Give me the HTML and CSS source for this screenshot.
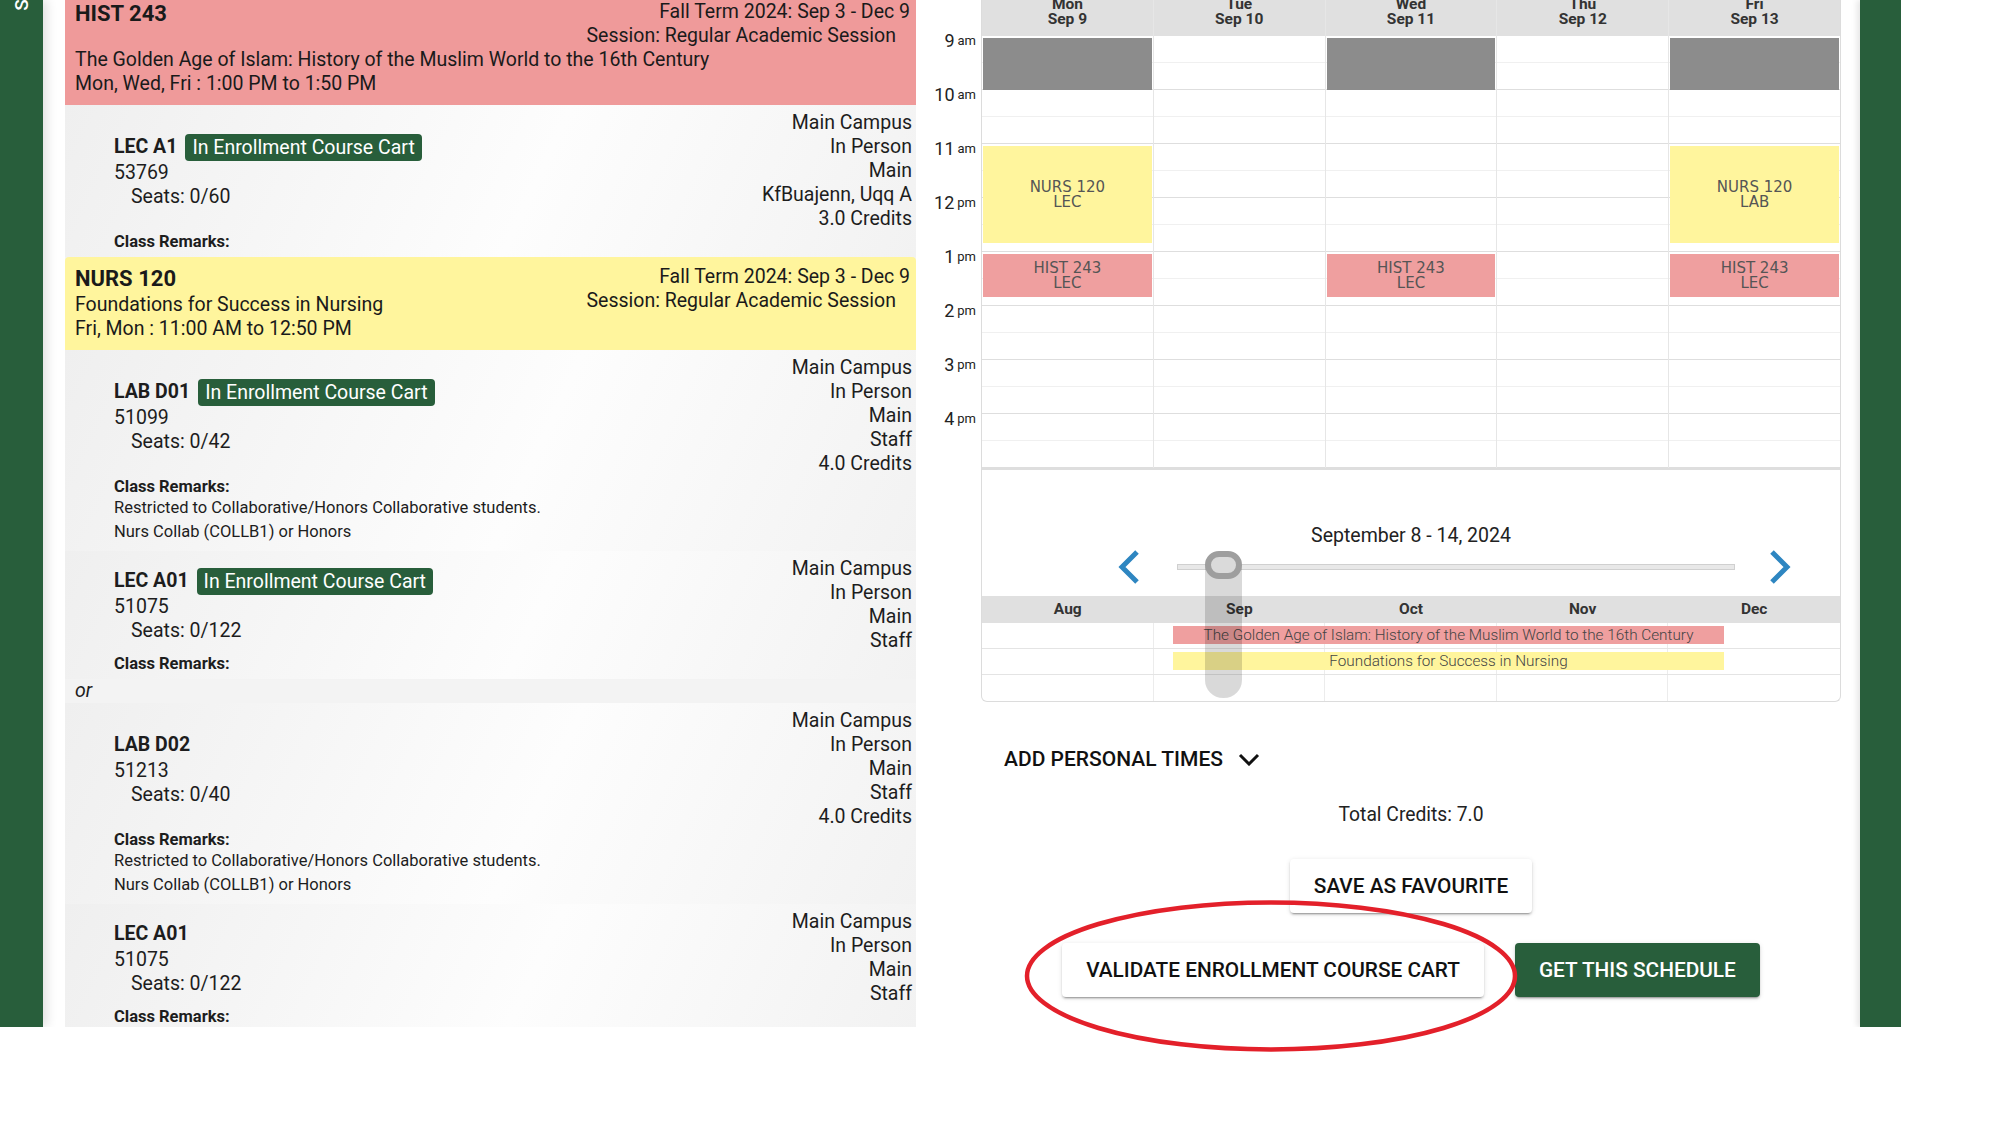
FILE: index.html
```html
<!DOCTYPE html>
<html lang="en">
<head>
    <meta charset="UTF-8">
    <meta name="viewport" content="width=device-width, initial-scale=1.0">
    <title>Schedule Builder</title>
    <link rel="stylesheet" href="styles.css">
</head>
<body>
    <div class="app">
        <aside class="rail rail-left"><span class="rail-label">SEARCH</span></aside>

        <section class="courses">
            <!-- HIST 243 -->
            <div class="course-head hist">
                <div class="term">
                    <div>Fall Term 2024: Sep 3 - Dec 9</div>
                    <div class="session">Session: Regular Academic Session</div>
                </div>
                <div class="code">HIST 243</div>
                <div><span class="line">The Golden Age of Islam: History of the Muslim World to the 16th Century</span></div>
                <div><span class="line">Mon, Wed, Fri : 1:00 PM to 1:50 PM</span></div>
            </div>
            <div class="option">
                <div class="pick"></div>
                <div class="option-body">
                    <div class="section">
                        <div class="section-main">
                            <div class="section-id">
                                <div class="section-name"><b>LEC A1</b><span class="badge">In Enrollment Course Cart</span></div>
                                <div>53769</div>
                                <div class="seats">Seats: 0/60</div>
                            </div>
                            <div class="section-meta">
                                <div>Main Campus</div>
                                <div>In Person</div>
                                <div>Main</div>
                                <div>KfBuajenn, Uqq A</div>
                                <div>3.0 Credits</div>
                            </div>
                        </div>
                        <div class="remarks">
                            <div class="remarks-title">Class Remarks:</div>
                        </div>
                    </div>
                </div>
            </div>

            <!-- NURS 120 -->
            <div class="course-head nurs">
                <div class="term">
                    <div>Fall Term 2024: Sep 3 - Dec 9</div>
                    <div class="session">Session: Regular Academic Session</div>
                </div>
                <div class="code">NURS 120</div>
                <div><span class="line">Foundations for Success in Nursing</span></div>
                <div><span class="line">Fri, Mon : 11:00 AM to 12:50 PM</span></div>
            </div>

            <div class="option">
                <div class="pick"><span class="radio checked"></span></div>
                <div class="option-body">
                    <div class="section">
                        <div class="section-main">
                            <div class="section-id">
                                <div class="section-name"><b>LAB D01</b><span class="badge">In Enrollment Course Cart</span></div>
                                <div>51099</div>
                                <div class="seats">Seats: 0/42</div>
                            </div>
                            <div class="section-meta">
                                <div>Main Campus</div>
                                <div>In Person</div>
                                <div>Main</div>
                                <div>Staff</div>
                                <div>4.0 Credits</div>
                            </div>
                        </div>
                        <div class="remarks">
                            <div class="remarks-title">Class Remarks:</div>
                            <div class="remarks-text">
                                <p>Restricted to Collaborative/Honors Collaborative students.</p>
                                <p>Nurs Collab (COLLB1) or Honors</p>
                            </div>
                        </div>
                    </div>
                    <div class="section">
                        <div class="section-main">
                            <div class="section-id">
                                <div class="section-name"><b>LEC A01</b><span class="badge">In Enrollment Course Cart</span></div>
                                <div>51075</div>
                                <div class="seats">Seats: 0/122</div>
                            </div>
                            <div class="section-meta">
                                <div>Main Campus</div>
                                <div>In Person</div>
                                <div>Main</div>
                                <div>Staff</div>
                            </div>
                        </div>
                        <div class="remarks">
                            <div class="remarks-title">Class Remarks:</div>
                        </div>
                    </div>
                </div>
            </div>

            <div class="or">or</div>

            <div class="option">
                <div class="pick"><span class="radio"></span></div>
                <div class="option-body">
                    <div class="section">
                        <div class="section-main">
                            <div class="section-id">
                                <div class="section-name"><b>LAB D02</b></div>
                                <div>51213</div>
                                <div class="seats">Seats: 0/40</div>
                            </div>
                            <div class="section-meta">
                                <div>Main Campus</div>
                                <div>In Person</div>
                                <div>Main</div>
                                <div>Staff</div>
                                <div>4.0 Credits</div>
                            </div>
                        </div>
                        <div class="remarks">
                            <div class="remarks-title">Class Remarks:</div>
                            <div class="remarks-text">
                                <p>Restricted to Collaborative/Honors Collaborative students.</p>
                                <p>Nurs Collab (COLLB1) or Honors</p>
                            </div>
                        </div>
                    </div>
                    <div class="section">
                        <div class="section-main">
                            <div class="section-id">
                                <div class="section-name"><b>LEC A01</b></div>
                                <div>51075</div>
                                <div class="seats">Seats: 0/122</div>
                            </div>
                            <div class="section-meta">
                                <div>Main Campus</div>
                                <div>In Person</div>
                                <div>Main</div>
                                <div>Staff</div>
                            </div>
                        </div>
                        <div class="remarks">
                            <div class="remarks-title">Class Remarks:</div>
                        </div>
                    </div>
                </div>
            </div>
        </section>

        <section class="planner">
            <div class="week">
                <div class="times">
                    <div class="times-head"></div>
                    <div class="hour"><span>9</span><small>am</small></div>
                    <div class="hour"><span>10</span><small>am</small></div>
                    <div class="hour"><span>11</span><small>am</small></div>
                    <div class="hour"><span>12</span><small>pm</small></div>
                    <div class="hour"><span>1</span><small>pm</small></div>
                    <div class="hour"><span>2</span><small>pm</small></div>
                    <div class="hour"><span>3</span><small>pm</small></div>
                    <div class="hour"><span>4</span><small>pm</small></div>
                </div>
                <div class="board">
                    <div class="day">
                        <div class="day-head">Mon<br>Sep 9</div>
                        <div class="day-body">
                            <div class="event busy" style="top: 2px; height: 52px;"></div>
                            <div class="event nurs" style="top: 110px; height: 97px;">NURS 120<br>LEC</div>
                            <div class="event hist" style="top: 218px; height: 43px;">HIST 243<br>LEC</div>
                        </div>
                    </div>
                    <div class="day">
                        <div class="day-head">Tue<br>Sep 10</div>
                        <div class="day-body"></div>
                    </div>
                    <div class="day">
                        <div class="day-head">Wed<br>Sep 11</div>
                        <div class="day-body">
                            <div class="event busy" style="top: 2px; height: 52px;"></div>
                            <div class="event hist" style="top: 218px; height: 43px;">HIST 243<br>LEC</div>
                        </div>
                    </div>
                    <div class="day">
                        <div class="day-head">Thu<br>Sep 12</div>
                        <div class="day-body"></div>
                    </div>
                    <div class="day">
                        <div class="day-head">Fri<br>Sep 13</div>
                        <div class="day-body">
                            <div class="event busy" style="top: 2px; height: 52px;"></div>
                            <div class="event nurs" style="top: 110px; height: 97px;">NURS 120<br>LAB</div>
                            <div class="event hist" style="top: 218px; height: 43px;">HIST 243<br>LEC</div>
                        </div>
                    </div>
                </div>
            </div>

            <div class="range">
                <div class="range-title">September 8 - 14, 2024</div>
                <div class="range-nav">
                    <svg class="chevron" width="22" height="34" viewBox="0 0 22 34"><polyline points="19,2 4,17 19,32" fill="none" stroke="#2e86c1" stroke-width="5"/></svg>
                    <div class="track"></div>
                    <svg class="chevron" width="22" height="34" viewBox="0 0 22 34"><polyline points="3,2 18,17 3,32" fill="none" stroke="#2e86c1" stroke-width="5"/></svg>
                </div>
                <div class="months">
                    <div>Aug</div>
                    <div>Sep</div>
                    <div>Oct</div>
                    <div>Nov</div>
                    <div>Dec</div>
                </div>
                <div class="term-row">
                    <span></span><span></span><span></span><span></span><span></span>
                    <div class="term-bar hist" style="left: 191px; width: 551px;">The Golden Age of Islam: History of the Muslim World to the 16th Century</div>
                </div>
                <div class="term-row">
                    <span></span><span></span><span></span><span></span><span></span>
                    <div class="term-bar nurs" style="left: 191px; width: 551px;">Foundations for Success in Nursing</div>
                </div>
                <div class="term-row last">
                    <span></span><span></span><span></span><span></span><span></span>
                </div>
                <div class="week-marker"></div>
                <div class="thumb"></div>
            </div>

            <div class="actions">
                <button class="personal">ADD PERSONAL TIMES
                    <svg width="22" height="13" viewBox="0 0 22 13"><polyline points="2,2 11,11 20,2" fill="none" stroke="#111" stroke-width="3"/></svg>
                </button>
                <div class="total">Total Credits: 7.0</div>
                <button class="btn">SAVE AS FAVOURITE</button>
                <div class="btn-row">
                    <button class="btn">VALIDATE ENROLLMENT COURSE CART</button>
                    <button class="btn primary">GET THIS SCHEDULE</button>
                </div>
            </div>
        </section>

        <aside class="rail rail-right"></aside>
    </div>

    <!-- red marker drawn over the screenshot -->
    <svg class="circled" width="500" height="160" viewBox="0 0 500 160">
        <ellipse cx="250" cy="79" rx="244" ry="73.5" fill="none" stroke="#e3202a" stroke-width="4.5"/>
    </svg>
</body>
</html>
```

FILE: styles.css
```css
* {
    margin: 0;
    padding: 0;
    box-sizing: border-box;
    font-family: Roboto, 'Liberation Sans', sans-serif;
}

html, body {
    min-height: 1125px;
}

body {
    background: white;
    color: #1d1d1d;
    position: relative;
}

.app {
    display: flex;
    width: 1901px;
    height: 1027px;
    overflow: hidden;
}

/* green side rails */
.rail {
    background: #285e3b;
    flex-shrink: 0;
    overflow: hidden;
}

.rail-left {
    width: 43px;
    margin-right: 22px;
    box-shadow: 4px 0 10px rgba(0,0,0,0.12);
}

.rail-label {
    display: block;
    writing-mode: vertical-rl;
    transform: rotate(180deg);
    color: white;
    font-size: 19px;
    font-weight: 500;
    letter-spacing: 1px;
    margin: -68px auto 0;
}

.rail-right {
    width: 41px;
    box-shadow: -3px 0 6px rgba(0,0,0,0.1);
}

/* course list */
.courses {
    width: 851px;
    flex-shrink: 0;
    margin-top: -8px;
    background: #f3f3f3;
    font-size: 19.5px;
    line-height: 24px;
}

.course-head {
    padding: 8px 6px 9px 10px;
    color: #1a1a1a;
}

.course-head.hist {
    background: #ef9a9a;
}

.course-head.nurs {
    background: #fff59d;
    border-radius: 4px 4px 0 0;
}

.term {
    float: right;
    text-align: right;
}

.session {
    padding-right: 14px;
}

.code {
    font-size: 22px;
    font-weight: 700;
    line-height: 28px;
}

.line {
    display: inline-block;
    white-space: nowrap;
}

.option {
    display: flex;
}

.pick {
    width: 49px;
    flex-shrink: 0;
    display: flex;
    align-items: center;
    justify-content: center;
}

.radio {
    width: 23px;
    height: 23px;
    border-radius: 50%;
    border: 2.5px solid #757575;
    margin-top: 4px;
}

.radio.checked {
    border: 3.5px solid #2196f3;
    background: radial-gradient(circle, #2196f3 5.5px, transparent 6px);
}

.option-body {
    flex: 1;
}

.section {
    margin-left: -49px;
    padding: 6px 4px 6px 49px;
    background: linear-gradient(115deg, #efefef 0%, #fdfdfd 55%, #f2f2f2 100%);
}

.section-main {
    display: flex;
    justify-content: space-between;
    align-items: center;
}

.section-name {
    display: flex;
    align-items: center;
    gap: 8px;
    height: 28px;
}

.section-name b {
    font-weight: 700;
}

.badge {
    background: #285e3b;
    color: white;
    border-radius: 4px;
    padding: 0 7px;
    height: 27px;
    line-height: 27px;
}

.seats {
    padding-left: 17px;
}

.section-meta {
    text-align: right;
}

.remarks {
    font-size: 16.5px;
    margin-top: 2px;
}

.remarks-title {
    font-weight: 700;
    line-height: 18px;
}

.remarks-text {
    padding-bottom: 1px;
}

.or {
    font-style: italic;
    padding: 0 10px;
    height: 24px;
}

/* weekly calendar */
.planner {
    width: 944px;
    flex-shrink: 0;
    padding-right: 19px;
}

.week {
    display: flex;
}

.times {
    width: 65px;
    flex-shrink: 0;
}

.times-head {
    height: 36px;
}

.hour {
    height: 54px;
    text-align: right;
    padding-right: 5px;
    line-height: 18px;
    color: #222;
}

.hour span {
    font-size: 18px;
    position: relative;
    top: -4px;
}

.hour small {
    font-size: 13px;
    margin-left: 3px;
    position: relative;
    top: -6px;
}

.board {
    display: flex;
    width: 860px;
    border-left: 1px solid #dcdcdc;
    border-right: 1px solid #dcdcdc;
}

.day {
    flex: 1;
    border-right: 1px solid #e6e6e6;
}

.day:last-child {
    border-right: none;
}

.day-head {
    background: #e0e0e0;
    height: 46px;
    margin-top: -10px;
    padding-top: 7px;
    text-align: center;
    font-size: 15.5px;
    font-weight: 700;
    line-height: 15px;
    color: #333;
}

.day-body {
    position: relative;
    height: 432px;
    background-image: linear-gradient(to bottom, transparent 26px, #f0f0f0 26px, #f0f0f0 27px, transparent 27px, transparent 53px, #dedede 53px);
    background-size: 100% 54px;
}

.event {
    position: absolute;
    left: 1px;
    right: 1px;
    display: flex;
    align-items: center;
    justify-content: center;
    text-align: center;
    font-family: 'DejaVu Sans', sans-serif;
    font-size: 15px;
    line-height: 15px;
    color: #555;
}

.event.busy {
    background: #8c8c8c;
}

.event.nurs {
    background: #fff59d;
}

.event.hist {
    background: #ef9f9f;
}

/* term range under the week */
.range {
    position: relative;
    margin-left: 65px;
    width: 860px;
    border: 1px solid #dcdcdc;
    border-top: 2px solid #dedede;
    border-radius: 0 0 6px 6px;
}

.range-title {
    text-align: center;
    font-size: 19.5px;
    line-height: 24px;
    color: #222;
    padding-top: 54px;
}

.range-nav {
    display: flex;
    align-items: center;
    height: 34px;
    margin: 2px 0 12px 136px;
}

.track {
    width: 558px;
    height: 6px;
    margin: 0 34px 0 37px;
    background: #e8e8e8;
    border: 1px solid #d0d0d0;
}

.months {
    display: grid;
    grid-template-columns: repeat(5, 1fr);
    background: #e0e0e0;
    height: 27px;
    line-height: 27px;
    text-align: center;
    font-size: 15.5px;
    font-weight: 700;
    color: #333;
}

.term-row {
    position: relative;
    display: grid;
    grid-template-columns: repeat(5, 1fr);
    height: 26px;
    border-bottom: 1px solid #e4e4e4;
}

.term-row.last {
    border-bottom: none;
}

.term-row span {
    border-right: 1px solid #ececec;
}

.term-row span:last-of-type {
    border-right: none;
}

.term-bar {
    position: absolute;
    top: 3px;
    height: 18px;
    line-height: 18px;
    text-align: center;
    font-size: 15.3px;
    font-weight: 300;
    color: #444;
}

.term-bar.hist {
    background: #ef9f9f;
}

.term-bar.nurs {
    background: #fff59d;
}

.week-marker {
    position: absolute;
    left: 223px;
    top: 81px;
    width: 37px;
    height: 147px;
    border-radius: 18px;
    background: rgba(0,0,0,0.15);
}

.thumb {
    position: absolute;
    left: 223px;
    top: 81px;
    width: 37px;
    height: 28px;
    border-radius: 14px;
    border: 6px solid #9e9e9e;
    background: #dadada;
}

/* actions */
.actions {
    margin-left: 65px;
    width: 860px;
    display: flex;
    flex-direction: column;
    align-items: center;
}

.personal {
    align-self: flex-start;
    margin: 45px 0 0 23px;
    background: none;
    border: none;
    display: flex;
    align-items: center;
    gap: 15px;
    font-size: 21px;
    font-weight: 500;
    line-height: 24px;
    color: #111;
}

.total {
    margin-top: 32px;
    font-size: 19.3px;
    line-height: 24px;
    color: #222;
}

.btn {
    height: 54px;
    padding: 0 24px;
    border: none;
    border-radius: 4px;
    background: white;
    color: #111;
    font-size: 20.8px;
    font-weight: 500;
    box-shadow: 0 3px 1px -2px rgba(0,0,0,0.2), 0 2px 2px 0 rgba(0,0,0,0.14), 0 1px 5px 0 rgba(0,0,0,0.12);
    margin-top: 32px;
}

.btn-row {
    display: flex;
    gap: 31px;
    margin-top: 30px;
}

.btn-row .btn {
    margin-top: 0;
}

.btn.primary {
    background: #285e3b;
    color: white;
}

.circled {
    position: absolute;
    left: 1021px;
    top: 897px;
    overflow: visible;
}
```
